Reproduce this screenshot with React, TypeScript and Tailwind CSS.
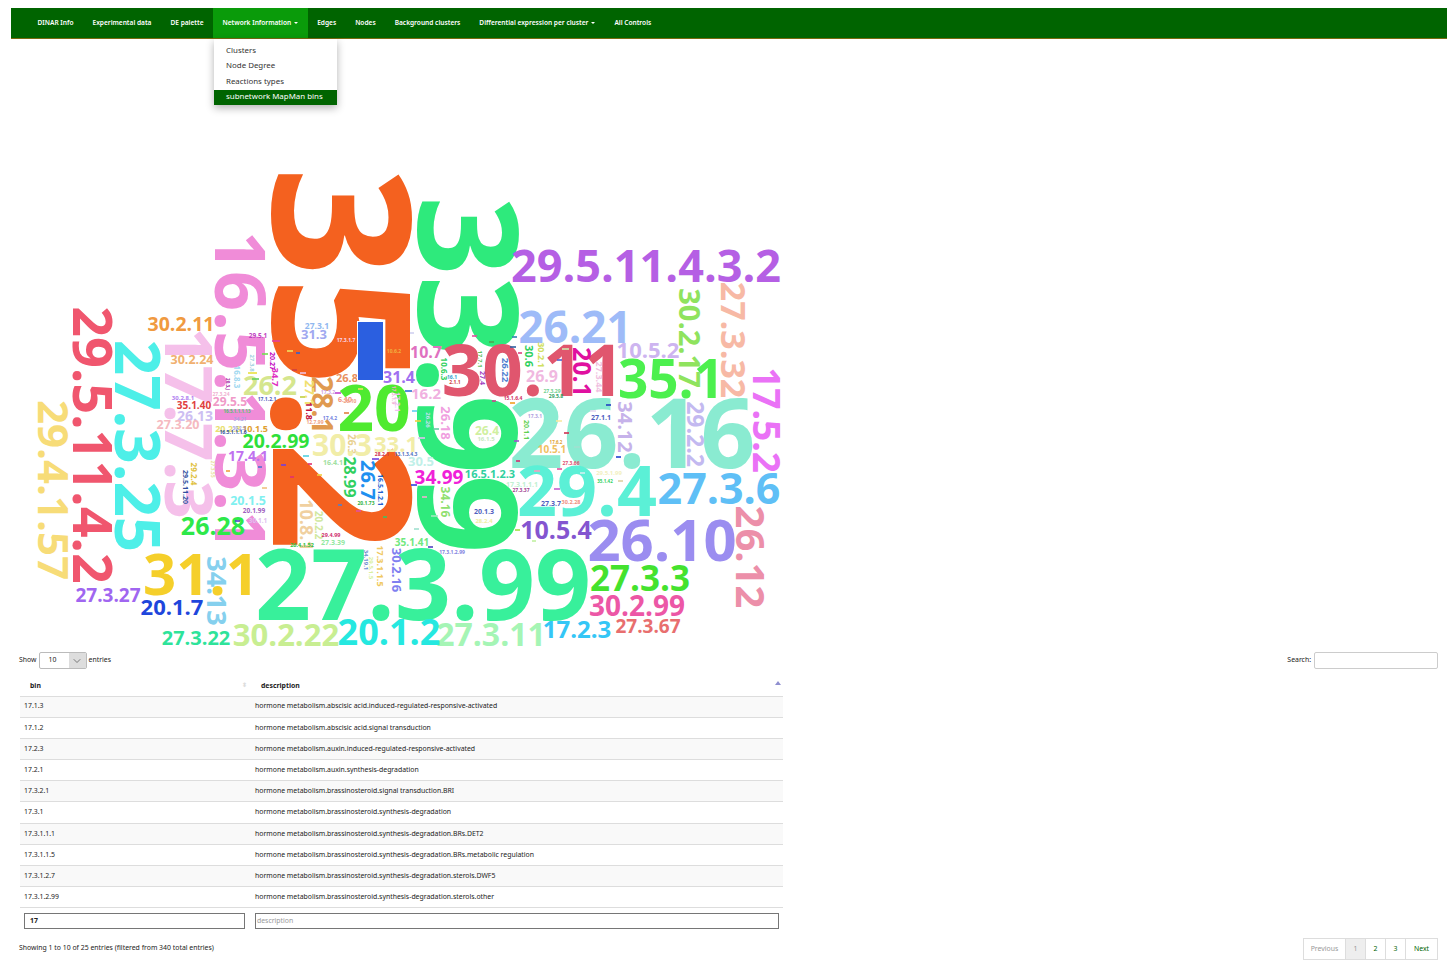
import React from 'react';
import { ChevronDown } from 'lucide-react';

// [text, centre x, centre y (page coordinates), font size, rotated, colour]
type Word = [string, number, number, number, number, string];

const CANVAS_TOP = 174;

const words: Word[] = [
  ['35.2', 341, 359, 192, 1, '#f4611f'],
  ['33.99', 467, 375, 139, 1, '#2eea7c'],
  ['27.3.99', 423, 585, 98, 0, '#38f09b'],
  ['29.5.11.4.3.2', 646, 266, 45, 0, '#b55fe4'],
  ['26.21', 575, 327, 44, 0, '#9ebbf8'],
  ['30.11', 533, 371, 71, 0, '#e0566e'],
  ['35.1', 671, 379, 53, 0, '#4cf04e'],
  ['30.2.17', 690, 338, 29, 1, '#8fe35e'],
  ['27.3.32', 733, 340, 34, 1, '#f7b9a5'],
  ['10.5.2', 648, 350, 22, 0, '#cdb4f0'],
  ['26.16', 632, 434, 96, 0, '#8aebd1'],
  ['17.5.2', 766, 420, 37, 1, '#ea72f6'],
  ['29.2.2', 695, 434, 23, 1, '#c3b9f0'],
  ['34.12', 624, 427, 20, 1, '#c6b2ea'],
  ['29.4', 587, 491, 70, 0, '#5bf0d6'],
  ['27.3.6', 719, 489, 43, 0, '#5fbff6'],
  ['26.12', 750, 557, 40, 1, '#ec8fa9'],
  ['26.10', 662, 541, 58, 0, '#9b8df0'],
  ['10.5.4', 556, 530, 25, 0, '#8455d0'],
  ['27.3.3', 640, 579, 35, 0, '#44e22e'],
  ['30.2.99', 637, 606, 28, 0, '#ec57a6'],
  ['27.3.67', 648, 627, 19, 0, '#e86e6e'],
  ['17.2.3', 577, 630, 24, 0, '#34c6f6'],
  ['27.3.11', 491, 635, 32, 0, '#a5f5b5'],
  ['20.1.2', 389, 633, 36, 0, '#25e8e0'],
  ['30.2.22', 286, 635, 31, 0, '#c8ee92'],
  ['27.3.22', 196, 639, 20, 0, '#2ee39a'],
  ['31.1', 201, 575, 58, 0, '#f5cf2a'],
  ['34.13', 217, 591, 27, 1, '#85d0ee'],
  ['27.3.27', 108, 596, 19, 0, '#a066f0'],
  ['20.1.7', 172, 607, 22, 0, '#1e46dc'],
  ['29.5.11.4.2', 92, 445, 54, 1, '#f0566e'],
  ['27.3.25', 137, 446, 62, 1, '#4defe8'],
  ['29.4.1.57', 53, 490, 42, 1, '#f7dc78'],
  ['17.7.3', 188, 423, 67, 1, '#f5c0ea'],
  ['16.5.1.3.1', 240, 391, 70, 1, '#f08cd8'],
  ['30.2.11', 181, 324, 19.5, 0, '#f09a40'],
  ['30.2.24', 192, 361, 12.5, 0, '#f0b070'],
  ['35.1.40', 194, 405, 10, 0, '#e04040'],
  ['26.13', 195, 416, 14, 0, '#cdbef2'],
  ['27.3.20', 178, 426, 12.5, 0, '#f5b9c0'],
  ['29.5.5', 230, 402, 12, 0, '#f09ac8'],
  ['20.2.99', 276, 441, 19.5, 0, '#2ee03a'],
  ['20.2.3', 228, 429, 9, 0, '#e8e070'],
  ['10.1.5', 255, 429, 9, 0, '#e0a030'],
  ['17.4.1', 248, 456, 14, 0, '#c070f0'],
  ['20.1.5', 248, 502, 12.5, 0, '#80f0f0'],
  ['20.1.99', 254, 511, 6.5, 0, '#a060c0'],
  ['26.28', 213, 526, 25, 0, '#2ee84a'],
  ['30.1.1', 258, 521, 6.5, 0, '#e0c0f0'],
  ['20', 374, 409, 64, 0, '#4fea30'],
  ['31.4', 399, 377, 16, 0, '#a070f0'],
  ['31.3', 314, 335, 13, 0, '#a0a8f0'],
  ['27.3.1', 317, 327, 8.5, 0, '#90b8f0'],
  ['28.1', 323, 405, 29, 1, '#e09a50'],
  ['26.8', 347, 378, 11, 0, '#e89060'],
  ['26.2', 270, 385, 27, 0, '#d5e68e'],
  ['27.1', 309, 393, 13, 1, '#f0e070'],
  ['11.8', 309, 411, 9, 1, '#c01040'],
  ['6.10', 345, 400, 7, 0, '#f09080'],
  ['34.7', 275, 377, 9.5, 1, '#e030c0'],
  ['20.27', 272, 361, 7, 1, '#c000c0'],
  ['29.5.1', 258, 336, 6.5, 0, '#c040c0'],
  ['16.8.3', 237, 377, 8, 1, '#a0d8f0'],
  ['27.3.8', 252, 363, 6, 1, '#a0d0e0'],
  ['26.3', 352, 444, 10, 1, '#e8d090'],
  ['30.3', 342, 446, 30, 0, '#f1eda8'],
  ['33.1', 396, 444, 22, 0, '#f1eda8'],
  ['30.5', 421, 462, 13, 0, '#c0f0e8'],
  ['16.4.1', 333, 463, 7, 0, '#a0e0a0'],
  ['28.99', 350, 477, 16, 1, '#30d060'],
  ['26.7', 367, 480, 20, 1, '#1e90f0'],
  ['16.5.1.2.1', 380, 490, 7, 1, '#2060d0'],
  ['10.8.1', 306, 525, 18, 1, '#f0d0a0'],
  ['20.2.2', 319, 525, 10, 1, '#d0e8a0'],
  ['27.3.39', 333, 543, 7, 0, '#90e8a0'],
  ['26.4.1.52', 302, 546, 5.5, 0, '#30c040'],
  ['29.4.99', 331, 536, 5.5, 0, '#d03070'],
  ['30.2.16', 396, 570, 13, 1, '#8080f0'],
  ['17.3.1.1.5', 380, 566, 9, 1, '#f0c860'],
  ['29.5.1.5', 371, 568, 6, 1, '#d8f0a0'],
  ['34.19.1', 366, 560, 6, 1, '#7090d0'],
  ['35.1.41', 412, 542, 10, 0, '#70e880'],
  ['34.99', 439, 478, 19, 0, '#f020d8'],
  ['16.5.1.2.3', 490, 474, 11, 0, '#30d0a0'],
  ['34.16', 445, 502, 12, 1, '#90e070'],
  ['20.1.3', 484, 512, 7, 0, '#5060c0'],
  ['28.2.4', 484, 521, 6, 0, '#f0f0a0'],
  ['26.4', 487, 431, 12, 0, '#d0f0a0'],
  ['16.1.5', 486, 439, 6, 0, '#c8e8c0'],
  ['26.18', 445, 423, 13, 1, '#f0a0e0'],
  ['10.5.1', 552, 449, 10, 0, '#f0c060'],
  ['27.1.1', 601, 418, 7, 0, '#5060c0'],
  ['27.3.7', 551, 504, 7, 0, '#5060c0'],
  ['30.2.28', 571, 503, 5.5, 0, '#f09080'],
  ['17.3.1.1.1', 522, 485, 7, 0, '#c0f0d0'],
  ['27.3.37', 521, 491, 5, 0, '#a04090'],
  ['29.5.1.99', 609, 473, 6, 0, '#f2efc0'],
  ['35.1.42', 605, 481, 4.5, 0, '#30d060'],
  ['17.3.1.2.99', 452, 553, 5, 0, '#8080e0'],
  ['10.7', 426, 352, 16, 0, '#e070c0'],
  ['10.6.3', 444, 369, 8, 1, '#30d060'],
  ['30.6', 529, 356, 11, 1, '#30d060'],
  ['30.2.1', 541, 355, 9, 1, '#d0e060'],
  ['26.22', 505, 370, 9.5, 1, '#5080d0'],
  ['26.9', 542, 376, 16, 0, '#f0b8e0'],
  ['20.1', 582, 372, 25, 1, '#e010a0'],
  ['27.3.44', 599, 377, 9, 1, '#f0c0e0'],
  ['16.2', 426, 394, 15, 0, '#f0b0e0'],
  ['27.4', 482, 378, 7, 1, '#a040c0'],
  ['17.7.1', 480, 359, 6, 1, '#60c060'],
  ['16.1', 452, 378, 5, 0, '#30a0d0'],
  ['2.1.1', 455, 383, 5, 0, '#d04040'],
  ['27.3.29', 552, 392, 5, 0, '#70d090'],
  ['29.5.8', 556, 397, 5, 0, '#30a060'],
  ['15.1.6.4', 513, 399, 5, 0, '#d03060'],
  ['26.26', 428, 420, 6, 1, '#c0e0f0'],
  ['20.1.1', 526, 430, 7, 1, '#60d050'],
  ['17.3.1', 535, 417, 5, 0, '#b0a0e0'],
  ['17.6.2', 556, 442, 4.5, 0, '#e0a030'],
  ['27.3.66', 571, 464, 5, 0, '#e05070'],
  ['17.3.2', 328, 393, 5, 0, '#d0a0e0'],
  ['17.4.2', 330, 419, 5, 0, '#7080e0'],
  ['12.7.99', 315, 423, 5, 0, '#f0a080'],
  ['17.3.1.9', 393, 395, 5, 1, '#f0b0d0'],
  ['28.2.1', 382, 455, 5, 0, '#d03050'],
  ['13.1.3.4.3', 406, 455, 5, 0, '#5070c0'],
  ['20.1.73', 366, 504, 5, 0, '#30b040'],
  ['34.21', 240, 420, 5, 0, '#b0a0e0'],
  ['16.5.1.1.1.6', 233, 433, 5, 0, '#3050a0'],
  ['30.2.3', 239, 428, 4.5, 0, '#a0a0e0'],
  ['29.5.11.20', 185, 487, 7, 1, '#3050a0'],
  ['29.2.4', 194, 474, 8, 1, '#e0c040'],
  ['27.3.55', 212, 469, 5, 1, '#e8e0a0'],
  ['30.2.8.1', 183, 398, 6, 0, '#b080f0'],
  ['27.3.24', 221, 395, 5, 0, '#f0b0d0'],
  ['16.5.1.1.1.13', 237, 411, 4.5, 0, '#50c070'],
  ['17.1.2.1', 267, 400, 5, 0, '#5060c0'],
  ['20.3.J', 228, 384, 4.5, 1, '#a020a0'],
  ['26.10', 350, 402, 5, 0, '#f0a080'],
  ['10.6.2', 394, 352, 5, 0, '#f0b040'],
  ['17.3.1.7', 346, 341, 5, 0, '#f8d8f0'],
  ['17.2.1', 397, 402, 7, 1, '#f0c0f0'],
];

// little flecks of far-off, unreadable words in the dense part of the cloud
const flecks: [number, number, number, string][] = [
  [272, 340, 8, '#e040a0'], [248, 372, 9, '#e8e040'], [252, 378, 7, '#60d060'], [262, 353, 6, '#70e050'],
  [287, 350, 6, '#f0e060'], [296, 352, 4, '#3060d0'], [292, 369, 5, '#d04040'], [300, 372, 6, '#f0c0e0'],
  [300, 396, 5, '#c0d040'], [335, 392, 6, '#c040d0'], [344, 412, 5, '#e08040'], [358, 388, 5, '#f0e060'],
  [405, 390, 7, '#3070d0'], [412, 410, 5, '#60d0f0'], [415, 420, 6, '#f0d040'], [418, 437, 7, '#e0c0f0'],
  [433, 428, 6, '#60d0a0'], [303, 455, 6, '#50d0e0'], [308, 463, 4, '#e03070'], [317, 474, 5, '#f0d040'],
  [372, 458, 7, '#7040e0'], [338, 504, 4, '#5080d0'], [356, 510, 5, '#e050a0'], [383, 516, 4, '#40c060'],
  [411, 484, 6, '#3040e0'], [422, 496, 5, '#f0b0d0'], [431, 515, 7, '#a0e8c0'], [414, 528, 5, '#a0e0d0'],
  [428, 546, 5, '#5040c0'], [510, 346, 6, '#3060a0'], [518, 352, 4, '#e04080'], [562, 348, 7, '#d0e8b0'],
  [557, 359, 5, '#5060d0'], [510, 402, 5, '#f0a020'], [514, 440, 5, '#a050d0'], [516, 460, 4, '#d03070'],
  [556, 420, 6, '#f8e8a0'], [564, 432, 5, '#d03050'], [574, 446, 6, '#a0e0d0'], [616, 456, 5, '#2040d0'],
  [618, 480, 5, '#e0d0a0'], [606, 404, 5, '#2040c0'], [590, 410, 6, '#e8d8f0'], [534, 470, 6, '#f0a0c0'],
  [557, 468, 5, '#e050a0'], [554, 488, 6, '#c060d0'], [580, 472, 5, '#d0f0f0'], [492, 400, 4, '#d04090'],
  [515, 529, 5, '#a0e040'], [532, 540, 4, '#c0f0a0'], [281, 464, 5, '#7040e0'], [290, 476, 4, '#e03070'],
  [235, 520, 5, '#5040c0'], [226, 470, 4, '#f0a040'], [262, 487, 5, '#f0c080'], [258, 466, 4, '#5070d0'],
  [410, 332, 4, '#d0d0f0'], [472, 335, 5, '#e050a0'], [489, 341, 5, '#50a050'], [512, 336, 5, '#3080b0'],
];

const rows = [
  ['17.1.3', 'hormone metabolism.abscisic acid.induced-regulated-responsive-activated'],
  ['17.1.2', 'hormone metabolism.abscisic acid.signal transduction'],
  ['17.2.3', 'hormone metabolism.auxin.induced-regulated-responsive-activated'],
  ['17.2.1', 'hormone metabolism.auxin.synthesis-degradation'],
  ['17.3.2.1', 'hormone metabolism.brassinosteroid.signal transduction.BRI'],
  ['17.3.1', 'hormone metabolism.brassinosteroid.synthesis-degradation'],
  ['17.3.1.1.1', 'hormone metabolism.brassinosteroid.synthesis-degradation.BRs.DET2'],
  ['17.3.1.1.5', 'hormone metabolism.brassinosteroid.synthesis-degradation.BRs.metabolic regulation'],
  ['17.3.1.2.7', 'hormone metabolism.brassinosteroid.synthesis-degradation.sterols.DWF5'],
  ['17.3.1.2.99', 'hormone metabolism.brassinosteroid.synthesis-degradation.sterols.other'],
];

function WordCloud() {
  return (
    <div className="relative h-[478px] w-[800px] overflow-hidden font-['Open_Sans',sans-serif] font-bold">
      {words.map(([text, x, y, size, rotated, color], i) => (
        <span
          key={i}
          className="absolute whitespace-nowrap leading-none"
          style={{
            left: x,
            top: y - CANVAS_TOP,
            fontSize: size,
            color,
            transform: `translate(-50%, -50%) rotate(${rotated ? 90 : 0}deg) translateY(-0.03em)`,
          }}
        >
          {text}
        </span>
      ))}
      {flecks.map(([x, y, w, color], i) => (
        <span
          key={i}
          className="absolute h-[2px] opacity-80"
          style={{ left: x, top: y - CANVAS_TOP, width: w, backgroundColor: color }}
        />
      ))}
      <div className="absolute left-[357px] top-[147px] h-[60px] w-[27px] border border-white bg-[#2b5fe0]" />
    </div>
  );
}

function NavItem({ label, caret, active }: { label: string; caret?: boolean; active?: boolean }) {
  return (
    <a className={`flex h-full items-center gap-[3px] px-[9.5px] ${active ? 'bg-[#0a9b0a]' : ''}`}>
      {label}
      {caret && <span className="h-0 w-0 border-x-[2px] border-t-[2px] border-x-transparent border-t-white" />}
    </a>
  );
}

export default function App() {
  return (
    <div className="relative min-h-[974px] bg-white pt-2 font-['Noto_Sans',sans-serif] text-[6.9px] text-[#222]">
      <nav className="ml-[11px] flex h-[31px] w-[1436px] border-b border-[#7a6a10] bg-[#006400] pl-[17px] text-[6.58px] font-semibold text-white">
        <NavItem label="DINAR Info" />
        <NavItem label="Experimental data" />
        <NavItem label="DE palette" />
        <div className="relative">
          <NavItem label="Network Information" caret active />
          <div className="absolute left-px top-[31px] z-10 flex h-[66px] w-[123px] flex-col bg-white pt-[4px] text-[7.9px] font-normal text-[#333] shadow-[0_3px_8px_rgba(0,0,0,0.3)]">
            <a className="flex h-[15.5px] items-center pl-[12px]">Clusters</a>
            <a className="flex h-[15.5px] items-center pl-[12px]">Node Degree</a>
            <a className="flex h-[15.5px] items-center pl-[12px]">Reactions types</a>
            <a className="flex h-[15px] items-center bg-[#006400] pl-[12px] text-white">subnetwork MapMan bins</a>
          </div>
        </div>
        <NavItem label="Edges" />
        <NavItem label="Nodes" />
        <NavItem label="Background clusters" />
        <NavItem label="Differential expression per cluster" caret />
        <NavItem label="All Controls" />
      </nav>

      <div className="mt-[135px]">
        <WordCloud />
      </div>

      <div className="flex items-center justify-between pl-[19px] pr-[15px]">
        <div className="flex h-[17px] items-center gap-[2px]">
          <span>Show</span>
          <div className="flex h-[17px] w-[48px] overflow-hidden rounded-[2px] border border-[#bbb]">
            <span className="flex flex-1 items-center pl-[9px]">10</span>
            <span className="flex w-[17px] items-center justify-center bg-[#ddd]">
              <ChevronDown size={12} strokeWidth={1.5} className="text-[#555]" />
            </span>
          </div>
          <span>entries</span>
        </div>
        <div className="flex items-center gap-[3px]">
          <span>Search:</span>
          <div className="h-[17px] w-[124px] rounded-[2px] border border-[#ccc]" />
        </div>
      </div>

      <table className="ml-[20px] mt-[7px] w-[763px] table-fixed border-collapse">
        <thead>
          <tr className="h-[20px] border-b border-[#ddd] font-bold">
            <th className="relative w-[230px] pl-[10px] text-left">
              bin
              <span className="absolute right-[3px] top-[6px] text-[6px] leading-none text-[#ddd]">⬍</span>
            </th>
            <th className="relative pl-[11px] text-left">
              description
              <span className="absolute right-[2px] top-[5px] h-0 w-0 border-x-[3px] border-b-[4px] border-x-transparent border-b-[#8f8fd0]" />
            </th>
          </tr>
        </thead>
        <tbody>
          {rows.map(([bin, description], i) => (
            <tr key={bin} className={`h-[21.2px] border-b border-[#ddd] ${i % 2 === 0 ? 'bg-[#f9f9f9]' : ''}`}>
              <td className="pl-[4px]">{bin}</td>
              <td className="pl-[5px]">{description}</td>
            </tr>
          ))}
          <tr className="h-[26px]">
            <td className="pl-[4px] pr-[5px]">
              <div className="flex h-[16px] items-center border border-[#767676] pl-[5px] font-bold">17</div>
            </td>
            <td className="pl-[5px] pr-[4px]">
              <div className="flex h-[16px] items-center border border-[#767676] pl-[1px] text-[#999]">description</div>
            </td>
          </tr>
        </tbody>
      </table>

      <div className="mt-[4px] flex items-start justify-between pl-[19px] pr-[15px]">
        <span className="pt-[5px]">Showing 1 to 10 of 25 entries (filtered from 340 total entries)</span>
        <div className="flex h-[22px] border border-[#ddd]">
          <a className="flex w-[41px] items-center justify-center text-[#999]">Previous</a>
          <a className="flex w-[20px] items-center justify-center border-l border-[#ddd] bg-[#eee] text-[#999]">1</a>
          <a className="flex w-[20px] items-center justify-center border-l border-[#ddd] text-[#006400]">2</a>
          <a className="flex w-[20px] items-center justify-center border-l border-[#ddd] text-[#006400]">3</a>
          <a className="flex w-[32px] items-center justify-center border-l border-[#ddd] text-[#006400]">Next</a>
        </div>
      </div>
    </div>
  );
}
